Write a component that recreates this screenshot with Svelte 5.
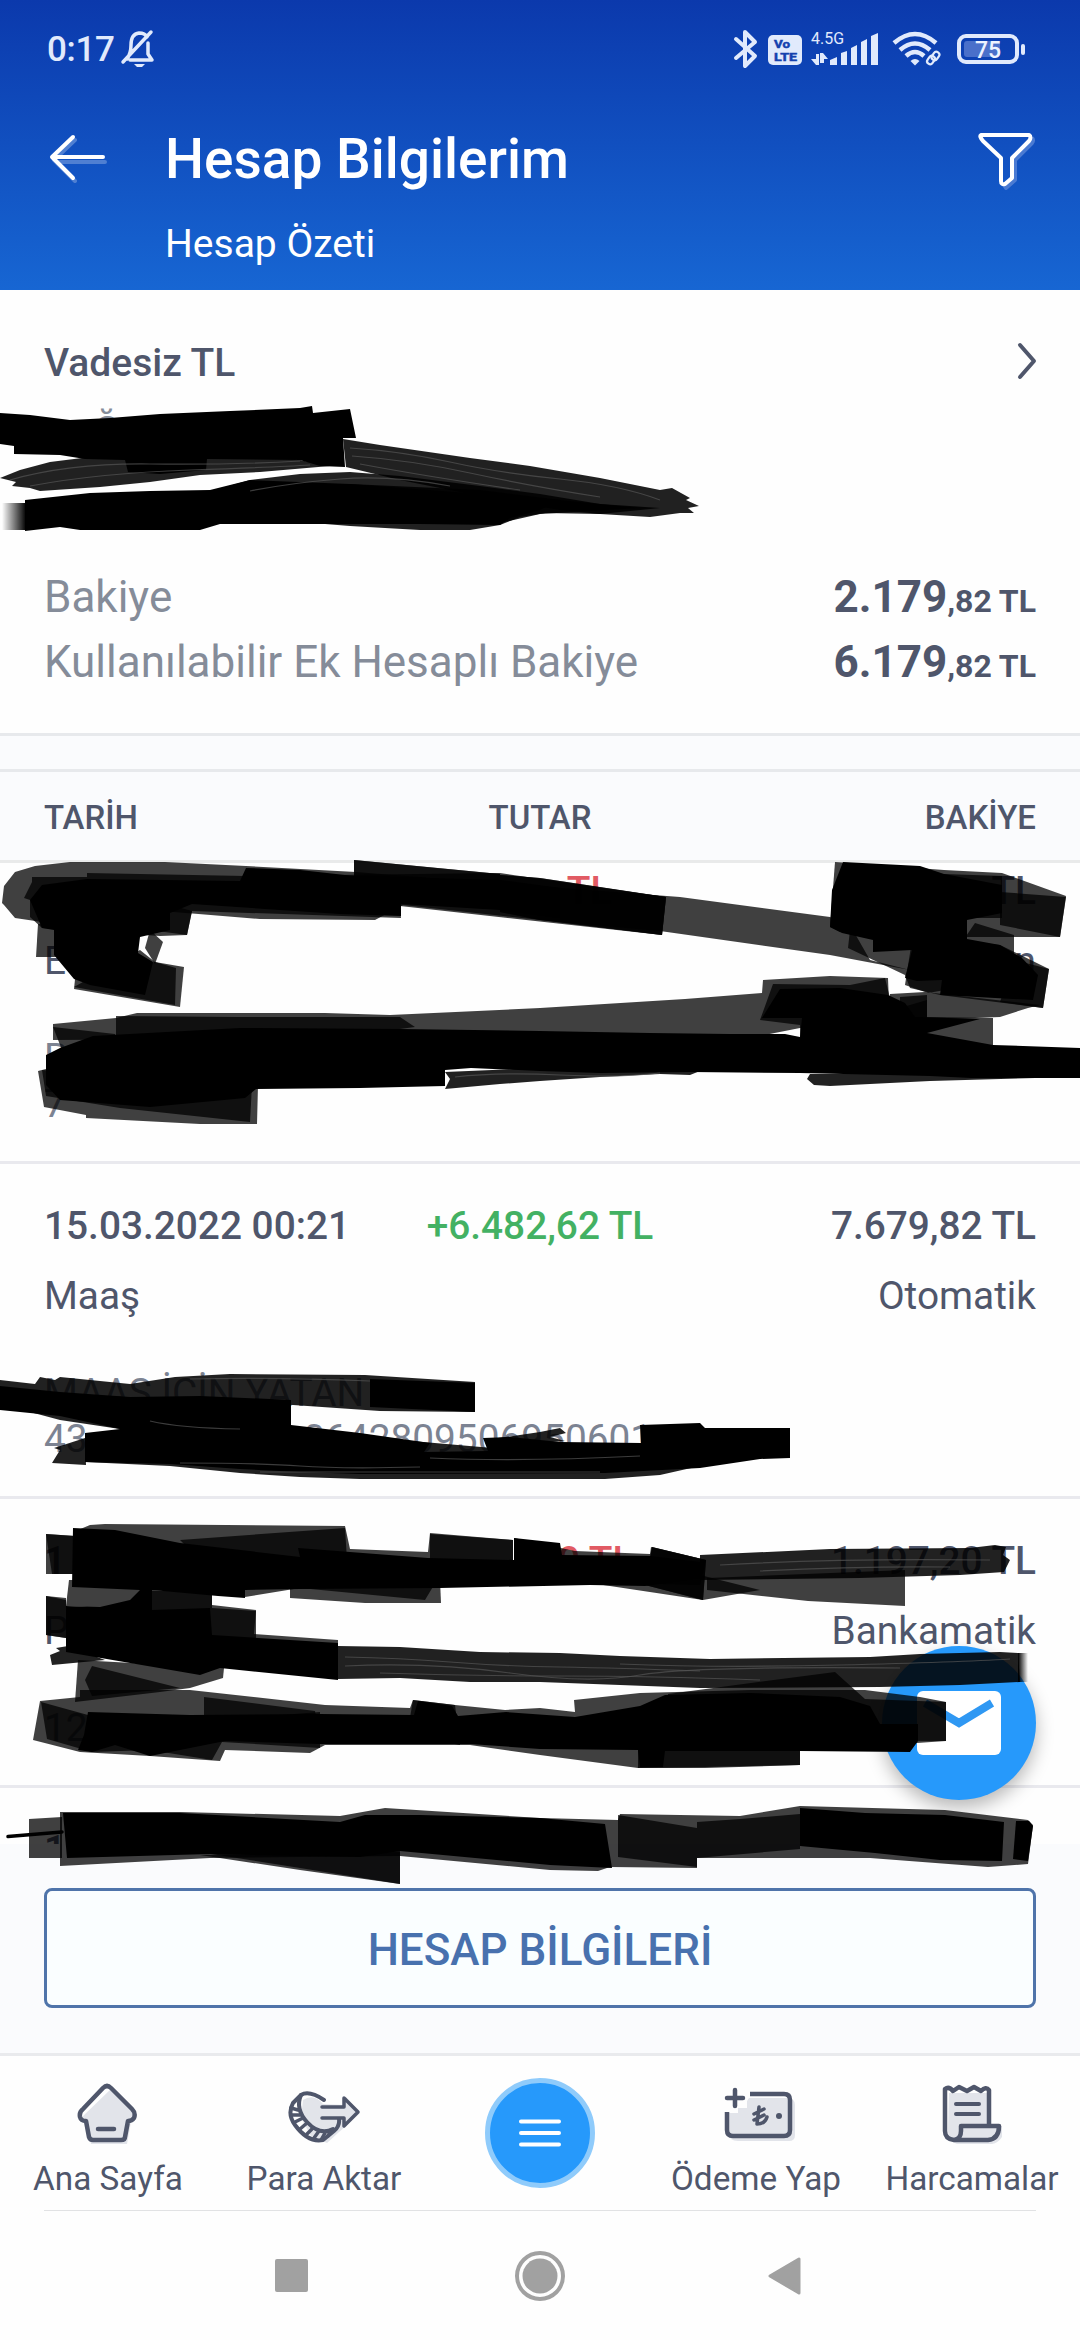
<script lang="ts">
  type Balance = { label: string; whole: string; cents: string };
  type Transaction = {
    date: string;
    amount: string;
    inset?: number;
    balance: string;
    kind: string;
    channel: string;
    details: string[];
  };

  const balances: Balance[] = [
    { label: 'Bakiye', whole: '2.179', cents: ',82 TL' },
    { label: 'Kullanılabilir Ek Hesaplı Bakiye', whole: '6.179', cents: ',82 TL' },
  ];

  // Hidden rows only carry the fragments that stay readable around the marker.
  const transactions: Transaction[] = [
    { date: '', amount: 'TL', inset: 94, balance: 'TL', kind: 'E', channel: 'n', details: ['B', '7'] },
    {
      date: '15.03.2022 00:21',
      amount: '+6.482,62 TL',
      balance: '7.679,82 TL',
      kind: 'Maaş',
      channel: 'Otomatik',
      details: ['MAAŞ İÇİN YATAN', '43'],
    },
    { date: '1', amount: '0 TL', inset: 72, balance: '1.197,20 TL', kind: 'P', channel: 'Bankamatik', details: ['12'] },
    { date: '1', amount: '', balance: '', kind: '', channel: '', details: [] },
  ];

  // Semi-transparent marker strokes, they get darker where they overlap.
  const marker = [
    '2,903 4,886 15,872 35,866 70,862 165,862 246,866 356,872 430,878 680,897 830,917 850,925 870,960 910,970 830,955 660,931 540,920 403,905 375,920 260,919 150,910 42,922 15,918 4,905',
    '38,924 36,957 60,957 60,925',
    '150,930 163,942 155,964 145,948',
    '155,962 184,967 180,1007 74,989 76,970',
    '140,950 155,962 176,968 175,1005 74,987',
    '32,877 87,877 87,873 246,876 500,873 666,897 662,935 400,906 401,918 192,911 187,935 160,936 42,928 30,917 30,900 24,898 32,882',
    '354,860 500,874 500,900 354,900',
    '354,860 500,874 500,900 354,900',
    '500,875 540,878 666,897 662,935 540,920 500,912',
    '500,875 540,878 666,897 662,935 540,920 500,912',
    '170,905 192,911 187,935 150,930',
    '835,862 850,863 944,870 944,930 840,932 830,927',
    '944,870 1002,873 1066,896 1060,937 944,937',
    '1000,892 1066,897 1060,937 1000,925',
    '944,874 1002,876 1002,918 944,918',
    '975,923 1014,935 1014,965 990,958 960,945',
    '850,930 1000,945 1049,969 1043,1008 940,995 910,988 905,975 848,948',
    '1014,960 1049,969 1043,1008 1000,1002',
    '912,940 905,985 928,993 945,990 945,950',
    '1040,1005 1028,1008 1000,1017 925,1020 890,1012 890,994 925,992',
    '888,978 830,976 763,980 762,993 685,999 540,1008 390,1015 325,1013 137,1013 116,1018 53,1024 53,1040 760,1036 800,1028 890,1030',
    '760,1020 773,984 850,985 885,978 893,1010 927,1000 927,1017 993,1018 993,1050 800,1050 800,1025',
    '900,997 927,995 927,1030 900,1030',
    '116,1016 237,1017 400,1017 415,1027 240,1050 116,1040',
    '53,1027 115,1034 115,1050 62,1050',
    '38,1071 44,1107 86,1115 86,1118 200,1124 257,1124 258,1085 50,1068',
    '42,1070 46,1096 120,1108 250,1122 252,1085',
    '90,1525 105,1524 345,1526 350,1549 428,1552 430,1533 513,1540 513,1570 78,1570 78,1530',
    '46,1534 75,1536 75,1574 46,1574',
    '46,1534 75,1536 75,1574 52,1574',
    '180,1540 345,1528 347,1560 200,1560',
    '514,1538 575,1551 650,1554 651,1547 706,1560 700,1585 514,1580',
    '430,1534 513,1540 513,1570 430,1570',
    '652,1547 706,1560 703,1600 645,1585',
    '652,1547 706,1560 703,1600 645,1585',
    '290,1575 440,1580 441,1603 365,1603 290,1598',
    '245,1575 440,1575 425,1600 300,1588 245,1597',
    '590,1583 703,1600 760,1590 700,1575 590,1575',
    '707,1578 905,1570 905,1606 808,1601 707,1590',
    '69,1580 152,1580 150,1610 66,1606',
    '46,1596 66,1598 66,1638 46,1635',
    '46,1596 66,1600 66,1638 46,1635',
    '140,1590 212,1592 212,1605 256,1610 254,1634 338,1640 338,1668 140,1640',
    '145,1590 212,1592 212,1608 256,1611 256,1640 145,1640',
    '78,1660 224,1668 223,1678 190,1688 160,1692 75,1702',
    '92,1666 180,1688 92,1696 85,1680',
    '40,1701 80,1697 80,1690 190,1690 325,1705 410,1708 413,1700 455,1705 505,1710 540,1708 575,1712 574,1700 640,1693 750,1690 865,1690 920,1697 946,1702 946,1741 800,1751 800,1765 705,1768 638,1768 540,1755 470,1745 325,1745 310,1753 225,1750 220,1761 150,1756 80,1752 33,1740',
    '41,1702 88,1715 220,1720 320,1712 320,1748 222,1742 212,1760 150,1750 92,1752 47,1739',
    '204,1697 315,1711 320,1740 204,1730',
    '413,1700 455,1705 460,1745 407,1735',
    '668,1694 835,1672 865,1699 946,1702 946,1741 668,1740',
    '638,1740 800,1740 800,1765 705,1767 638,1768',
    '29,1819 62,1817 62,1858 29,1858',
    '60,1812 180,1812 340,1816 385,1808 540,1818 618,1820 620,1814 740,1816 800,1806 945,1810 1028,1820 1033,1825 1028,1864 988,1867 870,1858 697,1858 697,1868 610,1867 598,1871 550,1870 400,1856 210,1858 60,1866',
    '200,1855 400,1852 400,1884 300,1870',
    '205,1853 400,1850 400,1884 300,1868',
    '618,1815 697,1828 697,1867 618,1857',
    '697,1822 740,1819 800,1814 800,1849 697,1858',
  ];

  const solid = [
    '0,413 30,415 70,420 110,418 160,414 230,411 300,408 312,406 313,413 350,409 356,438 343,438 345,467 320,466 300,460 207,459 206,470 160,474 128,472 125,460 85,459 60,455 14,454 14,446 0,444',
    '25,500 90,493 150,491 210,490 250,480 350,484 480,494 560,500 540,510 510,518 500,525 420,524 300,524 220,524 200,530 80,530 60,527 25,531',
    '42,885 87,879 240,881 246,868 300,870 354,876 500,880 560,888 560,918 500,910 401,904 401,916 340,914 192,904 170,913 170,930 140,937 138,953 153,962 145,995 90,985 74,979 54,955 54,930 42,928 30,900',
    '843,862 920,866 944,874 1002,885 1002,913 967,920 967,939 1000,945 1022,958 1038,975 1033,1000 940,995 942,980 917,981 905,978 912,950 873,952 873,940 842,933 830,927 832,890',
    '60,1048 93,1036 240,1028 400,1029 540,1031 650,1033 730,1034 785,1034 800,1037 802,1018 762,1018 780,989 840,988 888,995 905,1003 915,1017 980,1019 927,1033 993,1045 1080,1048 1080,1078 971,1078 930,1076 800,1073 690,1072 600,1073 540,1071 471,1068 445,1070 445,1086 360,1088 256,1089 245,1098 150,1107 60,1100 46,1085 46,1055',
    '370,1379 475,1383 475,1412 370,1407',
    '0,1386 60,1392 130,1397 200,1396 291,1400 291,1425 360,1433 430,1443 424,1452 488,1451 483,1438 510,1437 560,1442 641,1443 640,1425 700,1423 705,1428 790,1428 790,1458 760,1459 700,1468 605,1473 360,1474 300,1472 240,1469 170,1464 85,1462 85,1433 120,1429 60,1416 0,1410',
    '73,1528 115,1530 180,1543 300,1557 298,1548 428,1558 514,1560 514,1538 560,1543 562,1555 650,1556 700,1562 700,1578 645,1586 590,1585 440,1588 300,1589 245,1590 245,1598 218,1596 152,1590 152,1610 210,1608 212,1635 338,1643 338,1680 220,1668 200,1675 66,1652 66,1606 100,1607 130,1600 140,1590 72,1587',
    '88,1712 190,1715 320,1714 414,1715 418,1701 452,1706 458,1716 506,1712 575,1717 640,1706 665,1695 750,1693 840,1697 870,1706 880,1724 918,1724 918,1741 910,1752 800,1751 665,1751 663,1767 640,1767 638,1750 540,1749 470,1744 320,1744 225,1741 150,1756 115,1745 92,1752 78,1750 84,1735',
    '63,1813 180,1813 340,1822 365,1815 420,1815 540,1818 605,1824 612,1868 550,1865 400,1851 360,1857 210,1854 67,1858',
    '800,1808 865,1813 945,1815 1004,1822 1002,1861 940,1860 875,1853 800,1846',
    '1016,1821 1029,1821 1033,1826 1028,1861 1013,1859',
  ];

  // Dry-brush strokes with a visible grain.
  const brush = [
    '0,478 20,470 50,462 90,457 130,458 290,458 330,466 260,472 200,475 150,482 100,487 40,491 30,488 12,486 16,482',
    '343,439 380,445 470,458 530,466 600,478 660,490 672,488 690,498 686,500 699,506 688,508 694,513 680,513 650,517 600,514 560,510 500,500 440,488 400,480 346,467',
    '215,490 250,480 300,474 350,472 400,476 480,486 540,494 600,504 660,508 600,514 545,513 520,517 500,525 470,530 420,530 350,526 300,522',
    '220,505 350,484 480,490 560,500 640,508 540,514 500,523 400,524',
    '445,1089 450,1079 445,1072 540,1068 700,1071 690,1075 660,1074 600,1077 540,1081 500,1084',
    '807,1079 814,1085 830,1086 930,1081 1035,1078 1030,1074 810,1074',
    '0,1380 35,1384 40,1377 55,1380 60,1377 130,1384 175,1377 230,1374 365,1375 475,1382 475,1412 380,1411 293,1405 200,1402 0,1410',
    '52,1463 60,1450 54,1448 85,1438 86,1465',
    '85,1462 400,1440 700,1466 660,1475 605,1479 360,1479 300,1477 240,1473 170,1466',
    '30,1412 60,1410 140,1424 140,1432 60,1420',
    '485,1440 540,1432 560,1428 566,1433 550,1437 565,1441 500,1446',
    '700,1555 830,1549 970,1548 995,1545 1006,1547 1003,1555 1010,1560 1004,1572 960,1575 860,1578 700,1580',
    '338,1646 400,1647 480,1652 560,1653 620,1656 710,1659 870,1657 920,1654 1000,1652 1018,1653 1020,1682 960,1685 880,1687 700,1688 620,1685 540,1682 470,1682 400,1678 338,1679',
    '50,1655 60,1651 56,1648 68,1646 105,1660 52,1665',
  ];

  const grain = [
    'M10 480Q70 463 150 464T300 461',
    'M30 486Q100 473 190 470T310 465',
    'M350 448Q400 451 450 462T560 479T660 500',
    'M352 456Q410 460 470 473T600 497',
    'M360 464Q430 477 520 490',
    'M250 491Q290 483 340 479T450 486',
    'M455 1077Q500 1072 560 1075T660 1073',
    'M150 1421Q180 1428 240 1429',
    'M180 1463Q260 1463 300 1466T420 1467M260 1472H600M430 1458Q520 1462 640 1456',
    'M190 1379Q270 1377 370 1381',
    'M345 1657Q400 1658 450 1662T560 1667T700 1671',
    'M345 1666Q430 1662 510 1673T640 1675T900 1668',
    'M380 1673Q470 1676 560 1676T760 1680',
    'M620 1664Q720 1668 840 1665T1010 1659',
    'M720 1565Q840 1558 990 1560M760 1571Q860 1566 950 1567',
  ];
</script>

<div class="screen">
  <header>
    <div class="status">
      <span class="clock">0:17</span>
      <svg class="bell" width="36" height="40" viewBox="0 0 36 40" fill="none" stroke="currentColor" stroke-width="3.500">
        <path d="M7 30Q11 24 11 16Q11 5 19 4Q25 4 27 8M10 31H32L28 25V14M3 33L31 3" stroke-linecap="round" stroke-linejoin="round" />
        <path d="M14 35H25L22 38H17Z" fill="currentColor" stroke="none" />
      </svg>
      <svg class="bluetooth" width="26" height="40" viewBox="0 0 26 40" fill="none" stroke="currentColor" stroke-width="4" stroke-linejoin="round" stroke-linecap="round">
        <path d="M3 10L22 27L12 37V3L22 13L3 29" />
      </svg>
      <svg class="volte" width="34" height="30" viewBox="0 0 34 30">
        <rect width="34" height="30" rx="5" fill="currentColor" />
        <text x="6" y="13" class="badge" textLength="16" lengthAdjust="spacingAndGlyphs">Vo</text>
        <text x="6" y="26" class="badge" textLength="23" lengthAdjust="spacingAndGlyphs">LTE</text>
      </svg>
      <svg class="signal" width="68" height="43" viewBox="0 -8 68 43" fill="currentColor">
        <text x="0" y="12.500" class="network" textLength="33" lengthAdjust="spacingAndGlyphs">4.5G</text>
        <path d="M5 23H8V34H5L0 28H5ZM9 22H12L17 28H13V32H9Z" />
        <path d="M19 34V29L26 26V34ZM30 34V22L36 20V34ZM40 34V17L46 14V34ZM50 34V11L56 8V34ZM60 34V5L67 2V34Z" />
      </svg>
      <svg class="wifi" width="50" height="36" viewBox="0 0 50 36" fill="none" stroke="currentColor" stroke-width="4.500">
        <path d="M2 12Q23 -6 44 12M8 19Q23 6 38 19M14 25Q23 17 32 25" />
        <path d="M18.500 30Q23 26 27.500 30L23 34.500Z" fill="currentColor" stroke="none" />
        <g stroke-width="2.200">
          <rect x="34.500" y="26" width="9" height="6" rx="3" transform="rotate(-55 39 29)" />
          <rect x="39" y="22" width="9" height="6" rx="3" transform="rotate(-55 43.500 25)" />
        </g>
      </svg>
      <svg class="battery" width="68" height="30" viewBox="0 0 68 30">
        <rect x="2" y="2" width="58" height="26" rx="7" fill="none" stroke="currentColor" stroke-width="4" />
        <rect x="7" y="7" width="36" height="16" rx="3" fill="#4a70ca" />
        <rect x="64" y="10" width="4" height="11" rx="2" fill="currentColor" />
        <text x="31" y="23.500" class="charge" text-anchor="middle">75</text>
      </svg>
    </div>
    <div class="title-bar">
      <svg class="back" width="60" height="50" viewBox="0 0 60 50" fill="none" stroke-width="4" stroke-linecap="round" stroke-linejoin="round">
        <path d="M26 7L5 27L26 48M7 29H56" stroke="#4f7fd2" />
        <path d="M24 4L3 24L24 45M4 24H54" stroke="#fff" />
      </svg>
      <h1>Hesap Bilgilerim</h1>
      <svg class="filter" width="60" height="58" viewBox="0 0 60 58" fill="none" stroke-width="4" stroke-linejoin="round">
        <path d="M54 6Q56 8 54 11L37 28V48L28 56L26 53" stroke="#4a7ad2" />
        <path d="M3 3H51Q54 5 51 9L34 26V46L27 52Q23 53 23 49V26L5 9Q1 4 3 3Z" stroke="#fff" />
      </svg>
    </div>
    <p>Hesap Özeti</p>
  </header>

  <section class="account">
    <div class="account-head">
      <h2>Vadesiz TL</h2>
      <svg width="20" height="38" viewBox="0 0 20 38" fill="none" stroke="#4f566b" stroke-width="4" stroke-linecap="round" stroke-linejoin="round">
        <path d="M3 3L17 19L3 35" />
      </svg>
    </div>
    <div class="owner">Ğ</div>
    <div class="balances">
      {#each balances as item (item.label)}
        <div class="balance">
          <span>{item.label}</span>
          <strong>{item.whole}<small>{item.cents}</small></strong>
        </div>
      {/each}
    </div>
  </section>

  <div class="gap"></div>
  <div class="columns">
    <span>TARİH</span>
    <span>TUTAR</span>
    <span>BAKİYE</span>
  </div>

  <main>
    {#each transactions as item, index (index)}
      <article class:scrolled={index === 0}>
        <div class="row strong">
          <span>{item.date}</span>
          {#if item.inset}
            <span class="amount negative" style:padding-right="{item.inset}px">{item.amount}</span>
          {:else}
            <span class="amount">{item.amount}</span>
          {/if}
          <span>{item.balance}</span>
        </div>
        <div class="row">
          <span>{item.kind}</span>
          <span></span>
          <span>{item.channel}</span>
        </div>
        <div class="details">
          {#each item.details as line, i (i)}
            <div>
              {line}
              {#if line === '43'}
                <span class="reference">0642809506950601</span>
              {/if}
            </div>
          {/each}
        </div>
      </article>
    {/each}
  </main>

  <div class="action">
    <button>HESAP BİLGİLERİ</button>
  </div>

  <nav>
    <a href="#home">
      <svg width="66" height="62" viewBox="0 0 66 62" fill="none" stroke="#4f566b" stroke-width="4.500" stroke-linejoin="round" stroke-linecap="round">
        <path d="M35 7L62 32L56 39L52 61H16L11 37L7 34Z" fill="#e2e4ea" stroke="none" />
        <path d="M28 5Q32 1 36 5L57 26Q61 30 59 35Q57 38 53 38L50 54Q50 57 46 57H18Q15 57 14 54L11 38Q6 38 5 34Q4 29 8 26Z" />
        <path d="M23 46H39" />
      </svg>
      Ana Sayfa
    </a>
    <a href="#transfer">
      <svg width="74" height="62" viewBox="0 0 74 62" fill="none" stroke="#4f566b" stroke-width="4" stroke-linejoin="round" stroke-linecap="round">
        <path d="M16 17Q27 10 36 21L59 22V14L73 30L59 43L52 49L40 60L24 53L14 35Z" fill="#e2e4ea" stroke="none" />
        <path d="M37 17Q22 7 14 12L6 20Q0 31 8 42Q21 60 36 57L47 48Q53 43 52 36" />
        <path d="M14 12Q8 26 20 39Q33 53 46 46" />
        <path d="M4 25L11 27M5 32L13 32M8 39L16 35M13 46L20 40M20 51L26 45M27 55L32 48M34 57L38 50M41 53L43 49" stroke-width="3.500" />
        <path d="M35 24H57V15L71 29L57 43V35H35" fill="#e2e4ea" stroke-width="3.500" />
      </svg>
      Para Aktar
    </a>
    <div class="menu">
      <svg width="42" height="30" viewBox="0 0 42 30" stroke="#fff" stroke-width="4" stroke-linecap="round">
        <path d="M2 3.500H40M2 15H40M2 26.500H40" />
      </svg>
    </div>
    <a href="#payment">
      <svg class="wallet" width="74" height="62" viewBox="0 0 74 62" fill="none" stroke="#4f566b" stroke-width="4.500" stroke-linecap="round" stroke-linejoin="round">
        <path d="M28 15H66Q74 15 74 22V52Q74 58 68 58H17Q8 58 8 51V30H17V25H26V18Z" fill="#e2e4ea" stroke="none" />
        <path d="M29 11H63Q69 11 69 17V47Q69 53 63 53H12Q6 53 6 47V29" stroke-linecap="butt" />
        <path d="M14 7V23M6 15H22" />
        <path d="M38 24L36 41Q44 41 46 34M33 31L43 26M33 37L43 32" stroke-width="3.500" />
        <circle cx="58" cy="33" r="3" fill="#4f566b" stroke="none" />
      </svg>
      Ödeme Yap
    </a>
    <a href="#spending">
      <svg width="62" height="62" viewBox="0 0 62 62" fill="none" stroke="#4f566b" stroke-width="4.500" stroke-linecap="round" stroke-linejoin="round">
        <path d="M8 10H50V43H61V54Q57 60 51 61H16Q7 59 7 48Z" fill="#e2e4ea" stroke="none" />
        <path d="M48 42V7Q45 3 40 8L33 4L26 8L18 4L12 8Q8 3 4 6V48Q4 56 13 57H47Q58 56 58 43H20V48Q20 56 13 57" />
        <path d="M15 21H38M15 31H38" stroke-width="4" />
      </svg>
      Harcamalar
    </a>
  </nav>

  <div class="system">
    <svg width="33" height="33"><rect width="33" height="33" rx="2" fill="#a1a1a1" /></svg>
    <svg width="52" height="52" viewBox="0 0 52 52">
      <circle cx="26" cy="26" r="23" fill="none" stroke="#a1a1a1" stroke-width="4" />
      <circle cx="26" cy="26" r="17.500" fill="#a1a1a1" />
    </svg>
    <svg width="33" height="38"><path d="M31 2V36L2 19Z" fill="#a1a1a1" stroke="#a1a1a1" stroke-width="3" stroke-linejoin="round" /></svg>
  </div>

  <div class="mail">
    <svg width="84" height="64" viewBox="0 0 84 64">
      <rect width="84" height="64" rx="6" fill="#fff" />
      <path d="M8 12L42 32L75 12" fill="none" stroke="#2f98f3" stroke-width="8" />
    </svg>
  </div>

  <svg class="ink" width="1080" height="2340" viewBox="0 0 1080 2340">
    <defs>
      <linearGradient id="fade-in">
        <stop offset="0" stop-color="#000" stop-opacity="0" />
        <stop offset="1" stop-color="#000" />
      </linearGradient>
      <linearGradient id="fade-out">
        <stop offset="0" stop-color="#000" />
        <stop offset="1" stop-color="#000" stop-opacity="0" />
      </linearGradient>
    </defs>
    {#each marker as points}
      <polygon class="marker" {points} />
    {/each}
    {#each brush as points}
      <polygon class="brush" {points} />
    {/each}
    {#each solid as points}
      <polygon {points} />
    {/each}
    {#each grain as d}
      <path class="grain" {d} />
    {/each}
    <rect x="2" y="503" width="24" height="27" fill="url(#fade-in)" />
    <rect x="1018" y="1653" width="10" height="29" fill="url(#fade-out)" />
    <path d="M8 1836.500L62 1832" stroke="#000" stroke-width="3.500" stroke-linecap="round" />
  </svg>
</div>

<style>
  :global(body) {
    margin: 0;
    background: #fff;
  }

  .screen {
    position: relative;
    width: 1080px;
    height: 2340px;
    overflow: hidden;
    font-family: Roboto, 'Noto Sans', sans-serif;
    color: #4f566b;
    background: #fefefe;
  }

  h1,
  h2,
  p {
    margin: 0;
    font-weight: 500;
  }

  header {
    height: 290px;
    box-sizing: border-box;
    color: #fff;
    background: linear-gradient(#0b39ac, #1766d3);
  }

  .status {
    display: flex;
    align-items: flex-start;
    height: 127px;
    color: #e1eafc;
  }

  .clock {
    width: 73px;
    padding: 30px 0 0 47px;
    font-size: 35px;
    line-height: 40px;
    font-weight: 500;
    letter-spacing: -0.3px;
  }

  .bell {
    margin-top: 29px;
  }

  .bluetooth {
    margin: 29px 9px 0 577px;
  }

  .volte {
    margin: 35px 9px 0 0;
  }

  .signal {
    margin: 23px 13px 0 0;
  }

  .wifi {
    margin: 31px 15px 0 0;
  }

  .battery {
    margin-top: 34px;
  }

  .badge {
    font-size: 11.5px;
    font-weight: 700;
    fill: #1441ae;
    stroke: #1441ae;
    stroke-width: 0.5px;
  }

  .network {
    font-size: 16px;
  }

  .charge {
    font-size: 23px;
    font-weight: 500;
    fill: #edf3ff;
  }

  .title-bar {
    display: flex;
    height: 95px;
    padding: 0 42px 0 49px;
  }

  .back {
    margin-top: 6px;
  }

  h1 {
    flex: 1;
    margin-left: 56px;
    font-size: 55px;
    line-height: 64px;
  }

  .filter {
    margin-top: 5px;
  }

  header p {
    padding-left: 165px;
    font-size: 39px;
    line-height: 44px;
    font-weight: 400;
  }

  .account {
    height: 443px;
    border-bottom: 3px solid #e7e9ec;
  }

  .account-head {
    display: flex;
    justify-content: space-between;
    align-items: center;
    padding: 51px 43px 0 44px;
  }

  h2 {
    font-size: 39px;
    line-height: 44px;
  }

  .account-head svg {
    margin-top: -5px;
  }

  .owner {
    height: 44px;
    padding: 24px 0 112px 94px;
    font-size: 38px;
    line-height: 44px;
    color: #858c99;
  }

  .balance {
    display: flex;
    justify-content: space-between;
    align-items: baseline;
    height: 65px;
    padding: 0 44px;
    font-size: 44px;
    line-height: 65px;
    color: #858c99;
  }

  strong {
    font-size: 44px;
    font-weight: 700;
    color: #4f566b;
  }

  small {
    font-size: 32px;
  }

  .gap {
    height: 33px;
    background: #fafbfd;
    border-bottom: 3px solid #e7e9ec;
  }

  .columns {
    display: grid;
    grid-template-columns: 1fr 1fr 1fr;
    height: 88px;
    padding: 0 44px;
    font-size: 33px;
    font-weight: 500;
    line-height: 91px;
    background: #fafbfd;
    border-bottom: 3px solid #e9eaea;
  }

  .columns span:nth-child(2),
  .row span:nth-child(2) {
    text-align: center;
  }

  .columns span:last-child,
  .row span:last-child {
    text-align: right;
  }

  main {
    height: 981px;
    overflow: hidden;
  }

  article {
    padding: 40px 44px 34px;
    border-bottom: 3px solid #e9e9ee;
  }

  .scrolled {
    padding-top: 6px;
  }

  .row {
    display: grid;
    grid-template-columns: 1fr 1fr 1fr;
    height: 44px;
    margin-bottom: 26px;
    font-size: 38.8px;
    line-height: 44px;
    white-space: nowrap;
  }

  .row.strong {
    font-weight: 500;
  }

  .row .amount {
    color: #43b163;
  }

  .row span.negative {
    color: #e15a63;
    text-align: right;
  }

  .details {
    padding-top: 26px;
    font-size: 38.8px;
    line-height: 46px;
    color: #7c8392;
  }

  .details div {
    height: 46px;
    white-space: nowrap;
  }

  .reference {
    margin-left: 206px;
  }

  .action {
    height: 209px;
    box-sizing: border-box;
    padding: 44px 44px 0;
    background: #fafbfd;
  }

  .action button {
    display: block;
    width: 100%;
    height: 120px;
    padding: 3px 0 0;
    border: 3px solid #4f74aa;
    border-radius: 8px;
    background: #fafeff;
    color: #4871ae;
    font: 500 44px Roboto, sans-serif;
  }

  nav {
    display: grid;
    grid-template-columns: repeat(5, 216px);
    height: 154px;
    border-top: 3px solid #e9eaed;
  }

  nav a {
    display: flex;
    flex-direction: column;
    align-items: center;
    padding-top: 27px;
    font-size: 33.3px;
    line-height: 40px;
    color: #4f566b;
    text-decoration: none;
    white-space: nowrap;
  }

  nav a svg {
    margin-bottom: 14px;
  }

  nav a .wallet {
    margin-left: 4px;
  }

  .menu {
    display: flex;
    align-items: center;
    justify-content: center;
    width: 100px;
    height: 100px;
    margin: 22px auto 0;
    border: 5px solid #8fcbfb;
    border-radius: 50%;
    background: #2699fb;
  }

  .system {
    display: flex;
    align-items: center;
    height: 129px;
    margin: 0 44px;
    padding-left: 231px;
    border-top: 1px solid #e1e2e4;
  }

  .system svg:nth-child(2) {
    margin: 0 202px 0 206px;
  }

  .mail {
    position: absolute;
    left: 882px;
    top: 1646px;
    display: flex;
    align-items: center;
    justify-content: center;
    width: 154px;
    height: 154px;
    border-radius: 50%;
    background: #2699fb;
    box-shadow: 0 8px 18px rgba(0, 0, 0, 0.28);
  }

  .ink {
    position: absolute;
    inset: 0;
    pointer-events: none;
  }

  .marker {
    opacity: 0.75;
  }

  .brush {
    opacity: 0.87;
  }

  .grain {
    fill: none;
    stroke: #555;
    stroke-width: 1.2;
    opacity: 0.7;
  }
</style>
